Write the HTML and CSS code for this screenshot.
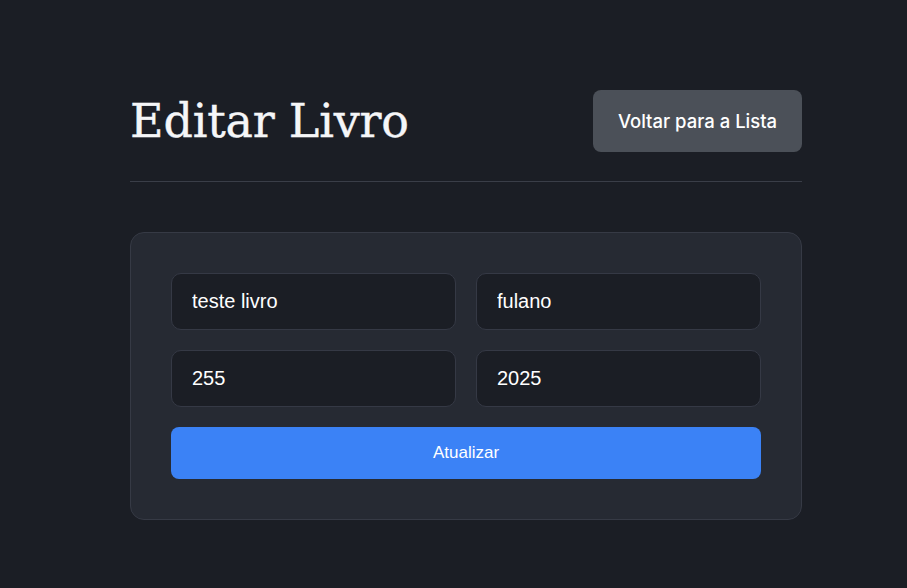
FILE: index.html
```html
<!DOCTYPE html>
<html lang="pt">
<head>
<meta charset="utf-8">
<title>Editar Livro</title>
<link rel="stylesheet" href="styles.css">
</head>
<body>
<main class="page">
  <header class="header">
    <h1 class="title">Editar Livro</h1>
    <a class="back-btn" href="#">Voltar para a Lista</a>
  </header>
  <hr class="divider">
  <form class="card">
    <div class="grid">
      <input class="field" type="text" value="teste livro">
      <input class="field" type="text" value="fulano">
      <input class="field" type="text" value="255">
      <input class="field" type="text" value="2025">
    </div>
    <button class="submit" type="button">Atualizar</button>
  </form>
</main>
</body>
</html>
```
FILE: styles.css
```css
html, body {
  margin: 0;
  padding: 0;
  background: #1b1e25;
  color: #f3f4f6;
}
.page {
  width: 672px;
  margin-left: 130px;
  padding-top: 90px;
}
.header {
  display: flex;
  justify-content: space-between;
  align-items: center;
  height: 62px;
}
.title {
  margin: 0;
  font-family: "DejaVu Serif", "Liberation Serif", serif;
  font-weight: 400;
  font-size: 46px;
  color: #f5f6f8;
  letter-spacing: -0.2px;
  -webkit-text-stroke: 0.4px #f5f6f8;
}
.back-btn {
  display: flex;
  align-items: center;
  justify-content: center;
  width: 209px;
  height: 62px;
  box-sizing: border-box;
  background: #4b5058;
  border-radius: 8px;
  color: #ffffff;
  text-decoration: none;
  font-family: Inter, "Noto Sans", sans-serif;
  font-weight: 500;
  font-size: 18.5px;
}
.divider {
  margin: 29px 0 0 0;
  border: 0;
  border-top: 1px solid #3a3e48;
  height: 0;
}
.card {
  margin-top: 50px;
  box-sizing: border-box;
  background: #262a33;
  border: 1px solid #363a45;
  border-radius: 14px;
  padding: 40px 40px 40px 40px;
}
.grid {
  display: grid;
  grid-template-columns: 1fr 1fr;
  gap: 20px;
}
.field {
  box-sizing: border-box;
  height: 57px;
  width: 100%;
  background: #1b1e25;
  border: 1px solid #353945;
  border-radius: 10px;
  padding: 0 20px;
  color: #ffffff;
  font-family: "Liberation Sans", Arial, sans-serif;
  font-size: 20px;
  outline: none;
}
.submit {
  display: block;
  width: 100%;
  height: 52px;
  margin-top: 20px;
  border: 0;
  border-radius: 8px;
  background: #3b82f6;
  color: #ffffff;
  font-family: "Liberation Sans", Arial, sans-serif;
  font-size: 17px;
}
```
